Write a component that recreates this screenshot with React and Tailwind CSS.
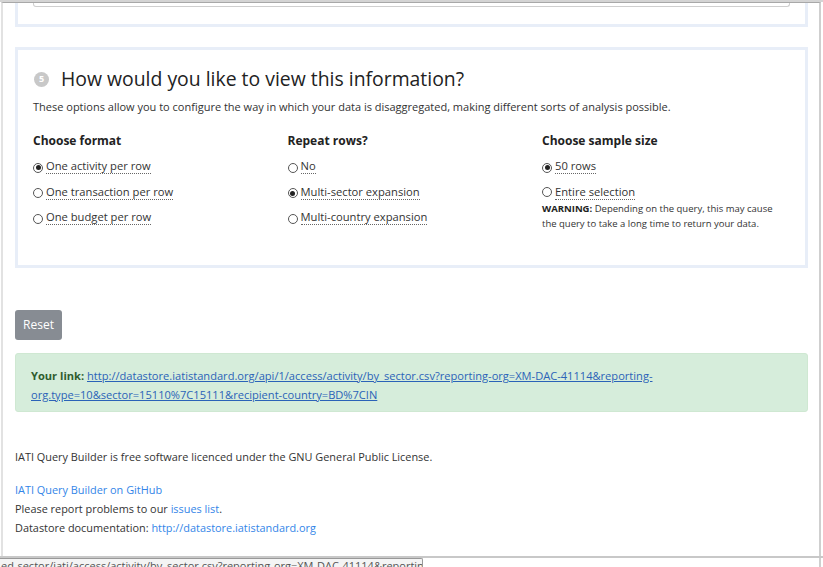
import React from 'react';

const Radio = ({ checked, label, className = 'h-[25.5px] items-center' }) => (
  <label className={`flex text-[11.2px] text-[#333] ${className}`}>
    <span className="w-[10px] h-[10px] rounded-full border border-[#555] bg-white flex items-center justify-center mr-[3px] mt-[2px] shrink-0">
      {checked && <span className="w-[5px] h-[5px] rounded-full bg-[#222]"></span>}
    </span>
    <span className="border-b border-dotted border-[#666] leading-[14px]">{label}</span>
  </label>
);

const Column = ({ title, options, children }) => (
  <div className="w-[254.5px] shrink-0">
    <h4 className="font-bold text-[12px] text-[#222] leading-[16px] mb-[5px]">{title}</h4>
    {options.map((o) => (
      <Radio key={o.label} checked={o.checked} label={o.label} className={o.className} />
    ))}
    {children}
  </div>
);

const App = () => {
  return (
    <div className="w-[823px] h-[567px] overflow-hidden bg-white relative font-['Open_Sans',sans-serif]">
      <div className="absolute inset-x-0 top-0 h-[2px] bg-[#d4d4d4]"></div>
      <div className="h-full border-t border-[#a8a8a8] mt-[2px] border-l-2 border-l-[#e2e2e2] border-r-2 border-r-[#cfcfcf] ml-[1px] mr-[2px]">
        <div className="pl-[12px] pr-[11px]">
          {/* Previous step (cut off) */}
          <div className="h-[24px] border-x-[3px] border-b-[3px] border-[#e8eef8] px-[15px]">
            <div className="h-[4px] border-x border-b border-[#cfcfcf] rounded-b-[3px]"></div>
          </div>

          {/* Step 5 */}
          <div className="mt-[20px] border-[3px] border-[#e8eef8] px-[15px] pt-[14px] h-[221px] overflow-hidden">
            <div className="flex items-center">
              <span className="w-[15px] h-[15px] rounded-full bg-[#c8c8c8] text-white text-[9px] font-bold flex items-center justify-center ml-[1px] mr-[12px]">5</span>
              <h2 className="text-[19.4px] text-[#222] leading-[30px]">How would you like to view this information?</h2>
            </div>
            <p className="text-[11px] text-[#333] mt-[5px] leading-[16px]">
              These options allow you to configure the way in which your data is disaggregated, making different sorts of analysis possible.
            </p>
            <div className="flex mt-[18px]">
              <Column
                title="Choose format"
                options={[
                  { label: 'One activity per row', checked: true },
                  { label: 'One transaction per row' },
                  { label: 'One budget per row' },
                ]}
              />
              <Column
                title="Repeat rows?"
                options={[
                  { label: 'No' },
                  { label: 'Multi-sector expansion', checked: true },
                  { label: 'Multi-country expansion' },
                ]}
              />
              <Column
                title="Choose sample size"
                options={[
                  { label: '50 rows', checked: true },
                  { label: 'Entire selection', className: 'h-[20px] items-start pt-[5.5px]' },
                ]}
              >
                <p className="text-[9.5px] text-[#333] leading-[15px] mt-[1px] w-[240px]">
                  <b className="text-[#222]">WARNING:</b> Depending on the query, this may cause the query to take a long time to return your data.
                </p>
              </Column>
            </div>
          </div>

          {/* Reset */}
          <button className="mt-[42px] h-[30px] w-[47px] rounded-[3px] bg-[#878c93] text-white text-[12px] flex items-center justify-center">
            Reset
          </button>

          {/* Link */}
          <div className="mt-[13px] h-[59px] rounded-[3px] bg-[#d6eddb] border border-[#cfe8d2] pl-[15px] pr-[20px] pt-[12px] text-[11.1px] leading-[19px]">
            <b className="text-[#2f5d2f]">Your link:</b>{' '}
            <a href="#" className="text-[#2b63b8] underline">
              http://datastore.iatistandard.org/api/1/access/activity/by_sector.csv?reporting-org=XM-DAC-41114&amp;reporting-org.type=10&amp;sector=15110%7C15111&amp;recipient-country=BD%7CIN
            </a>
          </div>

          {/* Footer */}
          <div className="mt-[35px] text-[10.9px] text-[#333] leading-[19px]">
            <p>IATI Query Builder is free software licenced under the GNU General Public License.</p>
            <p className="mt-[14px]"><a href="#" className="text-[#3385e8]">IATI Query Builder on GitHub</a></p>
            <p>Please report problems to our <a href="#" className="text-[#3385e8]">issues list</a>.</p>
            <p>Datastore documentation: <a href="#" className="text-[#3385e8]">http://datastore.iatistandard.org</a></p>
          </div>
        </div>
      </div>

      {/* Status bar */}
      <div className="absolute left-0 right-0 top-[556px] h-[2px] bg-[#c8c8c8]"></div>
      <div className="absolute left-0 top-[558px] w-[423px] h-[12px] bg-[#f4f4f4] border-t border-r border-[#999] rounded-tr-[2px] overflow-hidden whitespace-nowrap text-[11px] text-[#555] leading-[14px] pl-[1px]">
        ed-sector/iati/access/activity/by_sector.csv?reporting-org=XM-DAC-41114&amp;reporting-org.type=10
      </div>
    </div>
  );
};

export default App;
